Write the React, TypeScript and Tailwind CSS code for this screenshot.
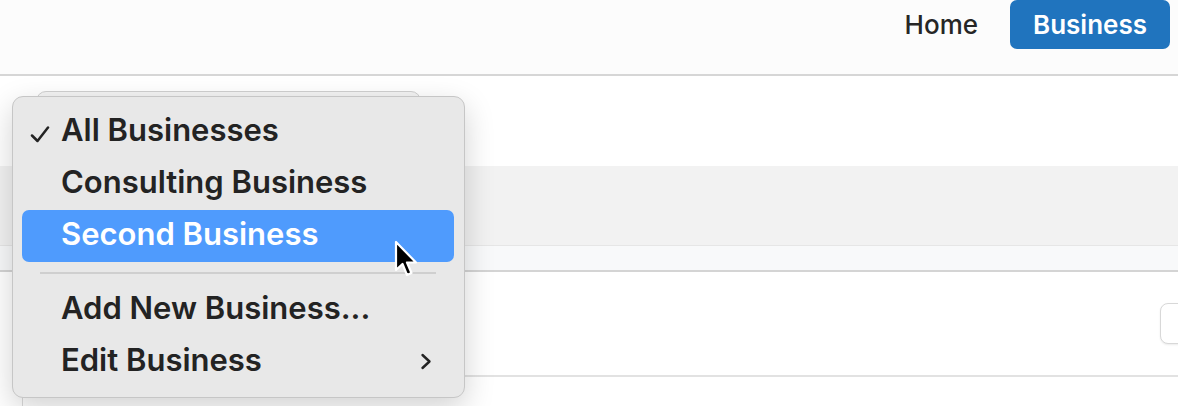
import React from "react";

const items = ["All Businesses", "Consulting Business", "Second Business"];

const Check = () => (
  <svg className="absolute left-[8px] top-[20px]" width="20" height="17" viewBox="0 0 20 17" fill="none">
    <path d="M2 9.5 L7.5 15 L18 1.5" stroke="#232323" strokeWidth="2.5" strokeLinecap="round" strokeLinejoin="round" />
  </svg>
);

const Chevron = () => (
  <svg className="absolute right-[22px] top-[18px]" width="12" height="17" viewBox="0 0 12 17" fill="none">
    <path d="M2.5 2 L9.5 8.5 L2.5 15" stroke="#232323" strokeWidth="2.4" strokeLinecap="round" strokeLinejoin="round" />
  </svg>
);

const Pointer = () => (
  <svg className="absolute left-[392px] top-[239px]" width="28" height="42" viewBox="0 0 28 42">
    <path
      d="M4 3 L4 31 L10.5 25 L15 36 L19.5 34 L15 23.5 L24 23.5 Z"
      fill="#000"
      stroke="#fff"
      strokeWidth="2.2"
      strokeLinejoin="round"
    />
  </svg>
);

const BusinessMenu: React.FC = () => {
  return (
    <div className="absolute left-[12px] top-[96px] w-[453px] h-[302px] rounded-[11px] bg-[#e8e8e8] border border-[#c6c6c6] shadow-[0_10px_30px_rgba(0,0,0,0.18)] pt-[9px] pl-[9px] pr-[10px] text-[31px] font-semibold text-[#232323]">
      {items.map((label, i) => (
        <div
          key={label}
          className={
            i === 2
              ? "relative h-[52px] flex items-center pl-[39px] rounded-[7px] bg-[#4f9bfd] text-white"
              : "relative h-[52px] flex items-center pl-[39px]"
          }
        >
          {i === 0 && <Check />}
          <span className="-mt-[3px]">{label}</span>
        </div>
      ))}
      <div className="h-[21px] flex items-center px-[18px]">
        <div className="h-[2px] w-full bg-[#cfcfcf]" />
      </div>
      <div className="relative h-[52px] flex items-center pl-[39px]">
        <span className="-mt-[2px]">Add New Business...</span>
      </div>
      <div className="relative h-[52px] flex items-center pl-[39px]">
        <span className="-mt-[1px]">Edit Business</span>
        <Chevron />
      </div>
    </div>
  );
};

export default function App() {
  return (
    <div className="relative w-[1178px] h-[406px] overflow-hidden bg-white font-['Inter',sans-serif]">
      <header className="h-[76px] bg-[#fcfcfc] border-b-2 border-[#d6d6d6] flex justify-end items-start pr-[8px]">
        <div className="h-[49px] flex items-center mr-[32px] text-[26px] font-medium text-[#262626]">Home</div>
        <button className="h-[49px] w-[160px] rounded-[7px] bg-[#2074be] text-white text-[26px] font-semibold">
          Business
        </button>
      </header>

      <div className="h-[90px] pt-[15px] pl-[36px]">
        <div className="w-[385px] h-[40px] rounded-[10px] border border-[#d0d0d0] bg-[#f4f4f4]" />
      </div>
      <div className="h-[80px] bg-[#f2f2f2] border-b border-[#e6e6e6]" />
      <div className="h-[26px] bg-[#f8f9fa] border-b-2 border-[#d4d4d4]" />
      <div className="ml-[22px] border-l border-[#dcdcdc]">
        <div className="h-[105px] border-b-2 border-[#e2e2e2] flex items-center justify-end">
          <div className="w-[40px] h-[41px] -mr-[22px] rounded-[8px] border border-[#d8d8d8] bg-white shadow-[0_1px_2px_rgba(0,0,0,0.08)]" />
        </div>
        <div className="h-[40px]" />
      </div>

      <BusinessMenu />
      <Pointer />
    </div>
  );
}
